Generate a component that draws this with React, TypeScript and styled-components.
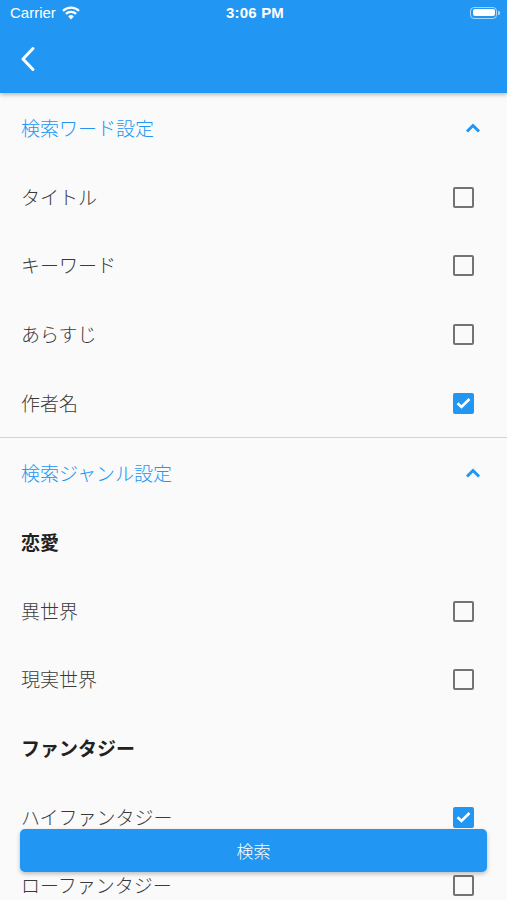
import React, { useState } from "react";
import styled, { createGlobalStyle } from "styled-components";

const GlobalStyle = createGlobalStyle`
  html, body {
    margin: 0;
    padding: 0;
    background: #fafafa;
    overflow: hidden;
  }
  * {
    box-sizing: border-box;
  }
`;

const BLUE = "#2196f3";
const JP = `"Noto Sans CJK JP", "Noto Sans", sans-serif`;

const Screen = styled.div`
  position: relative;
  width: 507px;
  height: 900px;
  overflow: hidden;
  background: #fafafa;
  font-family: ${JP};
`;

const AppBar = styled.header`
  position: relative;
  z-index: 2;
  background: ${BLUE};
  box-shadow: 0 2px 4px rgba(0, 0, 0, 0.25);
`;

const StatusBar = styled.div`
  height: 25px;
  display: grid;
  grid-template-columns: 1fr auto 1fr;
  align-items: center;
  padding: 0 7px 0 10px;
  color: #fff;
  font-family: "Liberation Sans", Arial, sans-serif;
  font-size: 15px;
`;

const Carrier = styled.div`
  display: flex;
  align-items: center;
  gap: 6px;
`;

const Clock = styled.div`
  font-weight: 700;
  letter-spacing: 0.2px;
`;

const Battery = styled.div`
  justify-self: end;
  display: flex;
  align-items: center;
  gap: 1px;
`;

const BatteryBody = styled.div`
  width: 27px;
  height: 12px;
  border: 1.5px solid rgba(255, 255, 255, 0.6);
  border-radius: 4px;
  padding: 1.5px;
  & > div {
    width: 100%;
    height: 100%;
    background: #fff;
    border-radius: 2px;
  }
`;

const BatteryTip = styled.div`
  width: 2px;
  height: 4px;
  background: rgba(255, 255, 255, 0.6);
  border-radius: 0 1px 1px 0;
`;

const Toolbar = styled.div`
  height: 68px;
  display: flex;
  align-items: center;
  padding-left: 19px;
`;

const BackButton = styled.button`
  border: none;
  background: none;
  padding: 0;
  display: flex;
  cursor: pointer;
`;

const Section = styled.section<{ $divider?: boolean }>`
  border-bottom: ${(p) => (p.$divider ? "1.5px solid #d2d2d2" : "none")};
`;

const SectionHeader = styled.div`
  height: 70px;
  display: flex;
  align-items: center;
  justify-content: space-between;
  padding: 0 26px 1px 21px;
  color: ${BLUE};
  font-size: 19px;
  font-weight: 300;
`;

const Row = styled.label`
  height: 68.6px;
  display: flex;
  align-items: center;
  justify-content: space-between;
  padding: 0 33px 0 21px;
  color: #3a3a3a;
  font-size: 19px;
  font-weight: 300;
  span:first-child {
    margin-bottom: 2px;
  }
`;

const GroupTitle = styled.div`
  height: 68.6px;
  display: flex;
  align-items: center;
  padding: 0 0 2px 21px;
  color: #212121;
  font-size: 19px;
  font-weight: 700;
`;

const Box = styled.span<{ $checked: boolean }>`
  width: 21px;
  height: 21px;
  border-radius: 2px;
  border: ${(p) => (p.$checked ? "none" : "2.4px solid #737373")};
  background: ${(p) => (p.$checked ? BLUE : "transparent")};
  display: flex;
  align-items: center;
  justify-content: center;
`;

const SearchButton = styled.button`
  position: absolute;
  left: 20px;
  right: 20px;
  bottom: 28px;
  height: 43px;
  border: none;
  border-radius: 5px;
  background: ${BLUE};
  color: #fff;
  font-family: ${JP};
  font-size: 17px;
  font-weight: 300;
  box-shadow: 0 2px 4px rgba(0, 0, 0, 0.25);
  cursor: pointer;
`;

const ChevronUp = () => (
  <svg width="16" height="10" viewBox="0 0 16 10">
    <path d="M2 8.5 L8 2.5 L14 8.5" fill="none" stroke={BLUE} strokeWidth="3" />
  </svg>
);

const Wifi = () => (
  <svg width="18" height="14" viewBox="0 0 18 14">
    <path d="M9 13.5 L6.2 10.4 A4 4 0 0 1 11.8 10.4 Z" fill="#fff" />
    <path d="M3.9 7.9 A7.2 7.2 0 0 1 14.1 7.9" fill="none" stroke="#fff" strokeWidth="2.2" />
    <path d="M1 4.9 A11.3 11.3 0 0 1 17 4.9" fill="none" stroke="#fff" strokeWidth="2.2" />
  </svg>
);

function CheckBox({ checked }: { checked: boolean }) {
  return (
    <Box $checked={checked}>
      {checked && (
        <svg width="15" height="12" viewBox="0 0 15 12">
          <path d="M1.5 6.2 L5.5 10 L13.5 2" fill="none" stroke="#fff" strokeWidth="2.6" />
        </svg>
      )}
    </Box>
  );
}

type Item = { label: string; checked: boolean };

function CheckRow({ item, onToggle }: { item: Item; onToggle: () => void }) {
  return (
    <Row onClick={onToggle}>
      <span>{item.label}</span>
      <CheckBox checked={item.checked} />
    </Row>
  );
}

export default function App() {
  const [words, setWords] = useState<Item[]>([
    { label: "タイトル", checked: false },
    { label: "キーワード", checked: false },
    { label: "あらすじ", checked: false },
    { label: "作者名", checked: true },
  ]);
  const [genres, setGenres] = useState<{ group: string; items: Item[] }[]>([
    {
      group: "恋愛",
      items: [
        { label: "異世界", checked: false },
        { label: "現実世界", checked: false },
      ],
    },
    {
      group: "ファンタジー",
      items: [
        { label: "ハイファンタジー", checked: true },
        { label: "ローファンタジー", checked: false },
      ],
    },
  ]);

  const toggleWord = (i: number) =>
    setWords((w) => w.map((it, j) => (j === i ? { ...it, checked: !it.checked } : it)));

  const toggleGenre = (g: number, i: number) =>
    setGenres((gs) =>
      gs.map((grp, gi) =>
        gi !== g
          ? grp
          : {
              ...grp,
              items: grp.items.map((it, j) => (j === i ? { ...it, checked: !it.checked } : it)),
            }
      )
    );

  return (
    <Screen>
      <GlobalStyle />
      <AppBar>
        <StatusBar>
          <Carrier>
            Carrier
            <Wifi />
          </Carrier>
          <Clock>3:06 PM</Clock>
          <Battery>
            <BatteryBody>
              <div />
            </BatteryBody>
            <BatteryTip />
          </Battery>
        </StatusBar>
        <Toolbar>
          <BackButton aria-label="戻る">
            <svg width="18" height="26" viewBox="0 0 18 26">
              <path d="M14 2.5 L4 13 L14 23.5" fill="none" stroke="#fff" strokeWidth="3" strokeLinecap="round" strokeLinejoin="round" />
            </svg>
          </BackButton>
        </Toolbar>
      </AppBar>

      <Section $divider>
        <SectionHeader>
          <span>検索ワード設定</span>
          <ChevronUp />
        </SectionHeader>
        {words.map((it, i) => (
          <CheckRow key={it.label} item={it} onToggle={() => toggleWord(i)} />
        ))}
      </Section>

      <Section>
        <SectionHeader>
          <span>検索ジャンル設定</span>
          <ChevronUp />
        </SectionHeader>
        {genres.map((grp, g) => (
          <React.Fragment key={grp.group}>
            <GroupTitle>{grp.group}</GroupTitle>
            {grp.items.map((it, i) => (
              <CheckRow key={it.label} item={it} onToggle={() => toggleGenre(g, i)} />
            ))}
          </React.Fragment>
        ))}
      </Section>

      <SearchButton>検索</SearchButton>
    </Screen>
  );
}
